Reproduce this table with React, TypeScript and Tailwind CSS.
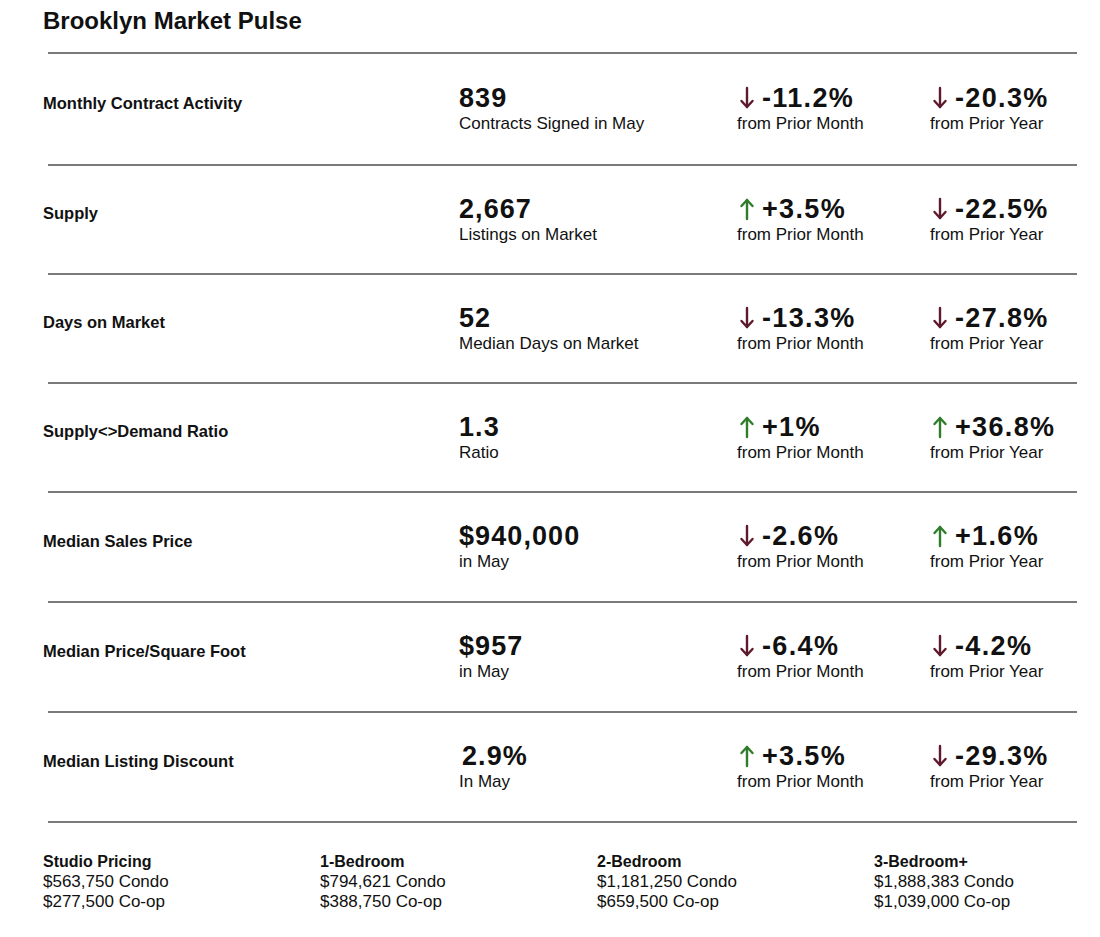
import React from 'react'

type Change = { dir: 'up' | 'down'; value: string }

interface Metric {
  label: string
  value: string
  sub: string
  month: Change
  year: Change
  valueIndent?: boolean
}

const metrics: Metric[] = [
  { label: 'Monthly Contract Activity', value: '839', sub: 'Contracts Signed in May', month: { dir: 'down', value: '-11.2%' }, year: { dir: 'down', value: '-20.3%' } },
  { label: 'Supply', value: '2,667', sub: 'Listings on Market', month: { dir: 'up', value: '+3.5%' }, year: { dir: 'down', value: '-22.5%' } },
  { label: 'Days on Market', value: '52', sub: 'Median Days on Market', month: { dir: 'down', value: '-13.3%' }, year: { dir: 'down', value: '-27.8%' } },
  { label: 'Supply<>Demand Ratio', value: '1.3', sub: 'Ratio', month: { dir: 'up', value: '+1%' }, year: { dir: 'up', value: '+36.8%' } },
  { label: 'Median Sales Price', value: '$940,000', sub: 'in May', month: { dir: 'down', value: '-2.6%' }, year: { dir: 'up', value: '+1.6%' } },
  { label: 'Median Price/Square Foot', value: '$957', sub: 'in May', month: { dir: 'down', value: '-6.4%' }, year: { dir: 'down', value: '-4.2%' } },
  { label: 'Median Listing Discount', value: '2.9%', sub: 'In May', month: { dir: 'up', value: '+3.5%' }, year: { dir: 'down', value: '-29.3%' }, valueIndent: true },
]

const pricing = [
  { title: 'Studio Pricing', condo: '$563,750 Condo', coop: '$277,500 Co-op' },
  { title: '1-Bedroom', condo: '$794,621 Condo', coop: '$388,750 Co-op' },
  { title: '2-Bedroom', condo: '$1,181,250 Condo', coop: '$659,500 Co-op' },
  { title: '3-Bedroom+', condo: '$1,888,383 Condo', coop: '$1,039,000 Co-op' },
]

function Arrow({ dir }: { dir: 'up' | 'down' }) {
  const color = dir === 'up' ? '#2f7d2a' : '#5e1a2d'
  return (
    <svg width="16" height="24" viewBox="0 0 16 24" fill="none" stroke={color} strokeWidth="2.4" strokeLinecap="round" strokeLinejoin="round">
      {dir === 'down' ? (
        <>
          <line x1="8" y1="2" x2="8" y2="21" />
          <polyline points="2.5,15 8,21 13.5,15" />
        </>
      ) : (
        <>
          <line x1="8" y1="22" x2="8" y2="3" />
          <polyline points="2.5,9 8,3 13.5,9" />
        </>
      )}
    </svg>
  )
}

function ChangeCell({ change, label }: { change: Change; label: string }) {
  return (
    <div className="flex flex-col">
      <div className="flex items-center gap-[7px] h-[30px] pl-[2px]">
        <Arrow dir={change.dir} />
        <span className="text-[27px] font-bold leading-[30px] tracking-[0.05em]">{change.value}</span>
      </div>
      <span className="text-[17px] leading-[22px]">{label}</span>
    </div>
  )
}

function Divider() {
  return <div className="h-[2px] bg-[#7a7a7a] ml-[5px] mr-[23px]" />
}

const rowHeights = ['h-[110px]', 'h-[107px]', 'h-[107px]', 'h-[107px]', 'h-[108px]', 'h-[108px]', 'h-[108px]']

export default function App() {
  return (
    <div className="w-[1100px] h-[937px] bg-white text-[#111] pl-[43px]" style={{ fontFamily: '"Liberation Sans", Arial, sans-serif' }}>
      {/* Header */}
      <div className="h-[52px] flex items-center pb-[11px]">
        <h1 className="text-[24px] font-bold leading-none">Brooklyn Market Pulse</h1>
      </div>
      <Divider />

      {/* Metrics */}
      {metrics.map((m, i) => (
        <div key={m.label}>
          <div className={`flex items-center ${rowHeights[i]}`}>
            <div className="w-[416px] shrink-0 text-[16.5px] font-bold pb-[12px]">{m.label}</div>
            <div className={`w-[278px] shrink-0 flex flex-col ${m.valueIndent ? 'pl-[3px]' : ''}`}>
              <span className="text-[27px] font-bold leading-[30px] tracking-[0.04em]">{m.value}</span>
              <span className={`text-[17px] leading-[22px] ${m.valueIndent ? '-ml-[3px]' : ''}`}>{m.sub}</span>
            </div>
            <div className="w-[193px] shrink-0">
              <ChangeCell change={m.month} label="from Prior Month" />
            </div>
            <div>
              <ChangeCell change={m.year} label="from Prior Year" />
            </div>
          </div>
          <Divider />
        </div>
      ))}

      {/* Pricing */}
      <div className="flex pt-[29px]">
        {pricing.map(p => (
          <div key={p.title} className="w-[277px] shrink-0 flex flex-col text-[17px] leading-[20px]">
            <span className="text-[16px] font-bold">{p.title}</span>
            <span>{p.condo}</span>
            <span>{p.coop}</span>
          </div>
        ))}
      </div>
    </div>
  )
}
